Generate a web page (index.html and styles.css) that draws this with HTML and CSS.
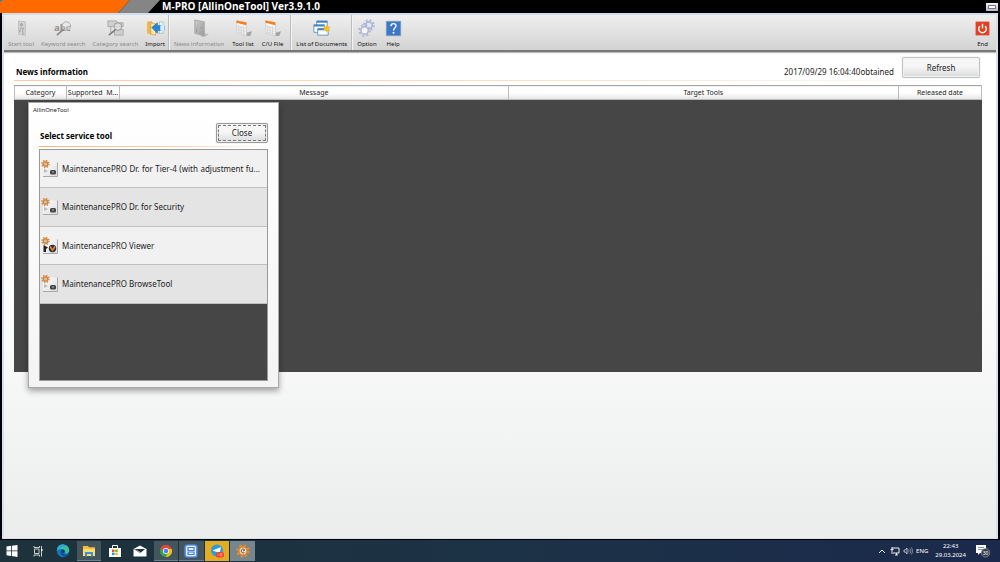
FILE: index.html
```html
<!DOCTYPE html>
<html lang="en">
<head>
<meta charset="utf-8">
<title>M-PRO [AllinOneTool]</title>
<link rel="stylesheet" href="styles.css">
</head>
<body>
<svg class="defs" aria-hidden="true">
  <defs>
    <linearGradient id="metal" x1="0" y1="0" x2="1" y2="1"><stop offset="0" stop-color="#cfcfcf"/><stop offset="1" stop-color="#989898"/></linearGradient>
    <linearGradient id="paper" x1="0" y1="0" x2="1" y2="1"><stop offset="0" stop-color="#fff"/><stop offset="1" stop-color="#dcdcdc"/></linearGradient>
    <symbol id="gear" viewBox="0 0 20 20">
      <g fill="none" stroke="currentColor"><circle cx="10" cy="10" r="5.4" stroke-width="2.6"/><circle cx="10" cy="10" r="8" stroke-width="3" stroke-dasharray="3.14 3.14"/></g>
    </symbol>
    <symbol id="sheet" viewBox="0 0 20 20">
      <path d="M11 15l8-2-2 5h-5z" fill="#a5a5a5"/>
      <path d="M3 2l10 2v14L3 15z" fill="#f4f4f4" stroke="#c4c4c4" stroke-width=".7"/>
      <path d="M2.500 1.500l10.500 2v3L2.500 4z" fill="#f58220"/>
      <path d="M5 7v8M7.500 7.500v8M10 8v9M4 8l8 2M4 11l8 2M4 13.500l8 2.200" stroke="#c9c9c9" stroke-width=".7"/>
    </symbol>
    <symbol id="tool" viewBox="0 0 18 18">
      <rect x="2" y="2.500" width="14.500" height="14" fill="url(#paper)"/>
      <path d="M16.500 2.500v14H2" fill="none" stroke="#a9a9a9"/>
      <circle cx="4.500" cy="4" r="2.300" fill="#b9c4cc" stroke="#d98637" stroke-width="1.500"/>
      <circle cx="4.500" cy="4" r="3.600" fill="none" stroke="#d98637" stroke-width="1.400" stroke-dasharray="1.410 1.410"/>
    </symbol>
  </defs>
</svg>
<div class="desktop">
  <header class="titlebar">
    <svg class="brand" viewBox="0 0 162 13" aria-hidden="true"><path d="M0 0h130l-12 13H0z" fill="#ff6a00"/><path d="M130 0h30l-12 13h-30z" fill="#858585"/><path d="M0 0h3L0 2z" fill="#1687d9"/></svg>
    <h1 class="app-title">M-PRO [AllinOneTool] Ver3.9.1.0</h1>
    <button class="minimize" aria-label="Minimize"><span></span></button>
  </header>

  <main class="window">
    <nav class="toolbar" aria-label="Main toolbar">
      <div class="group">
        <button class="tool" disabled><svg viewBox="0 0 20 20"><path d="M7 2l7 1v14l-7-1z" fill="#d6d6d6" stroke="#bcbcbc"/><circle cx="10" cy="6" r="1.700" fill="#aaa"/><path d="M9 9l3 1-1 3 1 4M9 10l-1 4" stroke="#b0b0b0" stroke-width="1.600" fill="none"/></svg>Start tool</button>
        <button class="tool" disabled><svg viewBox="0 0 20 20"><text x="0" y="13" class="abc">abc</text><circle cx="13" cy="7.500" r="4.500" fill="#eee" fill-opacity=".3" stroke="#aaa"/><path d="M10 11l-7 6" stroke="#888" stroke-width="1.700"/></svg>Keyword search</button>
        <button class="tool" disabled><svg viewBox="0 0 20 20"><path d="M2 2h9l1 2h6v4H2zM9 11h9v6H9z" fill="#cfcfcf" stroke="#aaa"/><path d="M5 8v6h4" fill="none" stroke="#aaa"/><circle cx="12.500" cy="8" r="4" fill="#ddd" fill-opacity=".8" stroke="#999"/><path d="M10 11l-7 6" stroke="#777" stroke-width="1.500"/></svg>Category search</button>
        <button class="tool"><svg viewBox="0 0 20 20"><path d="M1 3l5-1 1 2v13l-6-2z" fill="#edb84f"/><path d="M5 4l5 1v12l-5-1z" fill="#fae7ac" stroke="#c98a28" stroke-width=".6"/><path d="M14 3h4v12h-4z" fill="#edf4fa" stroke="#8aa" stroke-width=".6"/><path d="M6 9l6-5v3h7v5h-7v3z" fill="#2687d3" stroke="#176aac" stroke-width=".6"/><path d="M15 7l4-1v7l-4-1z" fill="#d9ecfa"/></svg>Import</button>
      </div>
      <div class="group">
        <button class="tool" disabled><svg viewBox="0 0 20 20"><path d="M13 15l7 1-5 3h-3z" fill="#b9b9b9"/><path d="M5 1l10 2v15L5 15z" fill="url(#metal)" stroke="#aaa"/><path d="M8 6v1M11 9h2M7 9v5" stroke="#999"/></svg>News information</button>
        <button class="tool"><svg><use href="#sheet"/></svg>Tool list</button>
        <button class="tool"><svg><use href="#sheet"/></svg>C/U File</button>
      </div>
      <div class="group">
        <button class="tool"><svg viewBox="0 0 20 20"><g stroke="#4283c4" stroke-width=".8"><path d="M5 2h11v8H5z" fill="#fff"/><path d="M5 3h11" stroke-width="1.800"/><path d="M2 6h11v8H2z" fill="#fff"/><path d="M2 7h11" stroke-width="1.800"/><path d="M6 10h11v7H6z" fill="#fff"/><path d="M6 11h11" stroke-width="1.800"/></g><path d="M15.500 6l1 2 2.500-.5-.8 2.500 1.300 1.800-2.500.4-1.500 2.300-1.300-2.300-2.500-.4 1.300-1.800-.8-2.500 2.300.5z" fill="#f7bf21"/></svg>List of Documents</button>
      </div>
      <div class="group">
        <button class="tool"><svg viewBox="0 0 20 20"><g color="#a9b5dc"><use href="#gear" x="6" y="0" width="13" height="13"/></g><g color="#b3b4da"><use href="#gear" x="1" y="5" width="14" height="14"/></g><circle cx="8" cy="12" r="3" fill="#f3f3fa"/></svg>Option</button>
        <button class="tool"><svg viewBox="0 0 20 20"><path d="M2.500 2.500h15v15h-15z" fill="#3c78c4" stroke="#7499c5"/><path d="M7.300 7.500c0-3.500 5.400-3.500 5.400-.3 0 2.300-2.700 2.300-2.700 4.800" fill="none" stroke="#fff" stroke-width="1.400"/><circle cx="10" cy="14.500" r="1" fill="#fff"/></svg>Help</button>
      </div>
      <button class="tool end"><svg viewBox="0 0 20 20"><path d="M3 3h14v14H3z" fill="#e63b1d" stroke="#c9674f" stroke-width=".6"/><path d="M7.300 7.500a4 4 0 1 0 5.400 0M10 5v5" fill="none" stroke="#fff" stroke-width="1.500"/></svg>End</button>
    </nav>

    <section class="news">
      <div class="news-head">
        <h2>News information</h2>
        <span class="obtained">2017/09/29 16:04:40obtained</span>
        <button class="button refresh">Refresh</button>
      </div>
      <table class="news-table">
        <colgroup><col class="c-category"><col class="c-model"><col class="c-message"><col class="c-target"><col class="c-date"></colgroup>
        <thead><tr><th>Category</th><th>Supported&nbsp; M...</th><th>Message</th><th>Target Tools</th><th>Released date</th></tr></thead>
        <tbody><tr><td colspan="5"></td></tr></tbody>
      </table>
    </section>
  </main>

  <section class="dialog" role="dialog" aria-label="AllinOneTool">
    <p class="dialog-title">AllinOneTool</p>
    <div class="dialog-head"><h2>Select service tool</h2><button class="button close">Close</button></div>
    <div class="services">
      <button class="service"><svg viewBox="0 0 18 18"><use href="#tool"/><path d="M3 9l4 2-4 2z" fill="#bbb"/><rect x="9" y="10" width="6" height="4.500" rx="1.500" fill="#444"/><path d="M11 12h2" stroke="#bbb"/></svg><span class="wide">MaintenancePRO Dr. for Tier-4 (with adjustment fu...</span></button>
      <button class="service"><svg viewBox="0 0 18 18"><use href="#tool"/><path d="M3 9l4 2-4 2z" fill="#bbb"/><rect x="9" y="10" width="6" height="4.500" rx="1.500" fill="#444"/><path d="M11 12h2" stroke="#bbb"/></svg><span>MaintenancePRO Dr. for Security</span></button>
      <button class="service"><svg viewBox="0 0 18 18"><use href="#tool"/><path d="M2.500 8l4.500 2.500-2 1.500v3H2.500z" fill="#222"/><circle cx="11.500" cy="11.500" r="3.700" fill="#333"/><path d="M9 9.500l2.500 3.500L14 9.500" stroke="#d98637" stroke-width="1.600" fill="none"/></svg><span>MaintenancePRO Viewer</span></button>
      <button class="service"><svg viewBox="0 0 18 18"><use href="#tool"/><path d="M3 9l4 2-4 2z" fill="#bbb"/><rect x="9" y="10" width="6" height="4.500" rx="1.500" fill="#444"/><path d="M11 12h2" stroke="#bbb"/></svg><span>MaintenancePRO BrowseTool</span></button>
    </div>
  </section>

  <footer class="taskbar">
    <div class="tasks">
      <button class="task" aria-label="Start"><svg viewBox="0 0 14 14"><path d="M1.500 2.500l4.500-.7v4.700H1.500zM6.800 1.700l5.700-.8v5.600H6.800zM1.500 7.300H6V12l-4.500-.7zM6.800 7.300h5.700v5.600l-5.700-.8z" fill="#fff"/></svg></button>
      <button class="task" aria-label="Task view"><svg viewBox="0 0 14 14"><path d="M3.500 5h4.500v4.500H3.500zM3 2v1.500h5.500V2M3 12.500V11h5.500v1.500M10.500 2v10.500" fill="none" stroke="#ddd" stroke-width=".9"/><path d="M10 5h1.500v2H10z" fill="#fff"/></svg></button>
      <button class="task" aria-label="Edge"><svg viewBox="0 0 14 14"><circle cx="7" cy="7" r="6.200" fill="#1673c2"/><path d="M1 7C1 2 4 .6 7 .6c4 0 6.500 3 6.300 6-.2 2.500-3 3.300-5 2.500 1.500-2 0-4-2.300-4C3.500 5 1.500 6 1 7z" fill="#39bf9d"/><path d="M1 7C1 2 4 .6 7 .6c2 0 3.500.8 4.500 2C7 1.500 3 3 1 7z" fill="#2ba3dc"/><path d="M6 5.500C3 8 5 12 9 12.500c1.500 0 3-1.500 3.500-2.300-3 1.300-6.500-.2-5.500-3.200z" fill="#0c4f97"/><path d="M6.500 6c2-.5 3 1.500 1.800 3-1.800-.3-2.500-1.500-1.800-3z" fill="#1b3540"/></svg></button>
      <button class="task active" aria-label="File Explorer"><svg viewBox="0 0 14 14"><path d="M1 2h5l1 1.300h6V12H1z" fill="#f4bd39"/><path d="M1 5h12v7H1z" fill="#ffdb76"/><path d="M3 8h8v4.500H9V10H5v2.500H3z" fill="#3c92d0"/></svg></button>
      <button class="task" aria-label="Store"><svg viewBox="0 0 14 14"><path d="M1 4h12v9H1z" fill="#fff"/><path d="M4.500 4V1.500h5V4" fill="none" stroke="#fff"/><path d="M4 5.500h2.500V8H4z" fill="#f25022"/><path d="M7.200 5.500h2.500V8H7.200z" fill="#7fba00"/><path d="M4 8.600h2.500v2.500H4z" fill="#00a4ef"/><path d="M7.200 8.600h2.500v2.500H7.200z" fill="#ffb900"/></svg></button>
      <button class="task" aria-label="Mail"><svg viewBox="0 0 14 14"><path d="M.5 5L7 1.500 13.500 5v7.500H.5z" fill="#fff"/><path d="M2 5h10L8 8.500z" fill="#1d323a"/><path d="M1 5l6.500 4" stroke="#1d323a" stroke-width=".6"/></svg></button>
      <button class="task active" aria-label="Chrome"><svg viewBox="0 0 14 14"><circle cx="7" cy="7" r="6" fill="#34a853"/><path d="M1.800 4A6 6 0 0 1 12.200 4L13 5.500H7L4.600 8.500z" fill="#ea4335"/><path d="M12.700 5A6 6 0 0 1 6.700 13l3-5L9 5z" fill="#fbbc05"/><circle cx="7" cy="7" r="3" fill="#fff"/><circle cx="7" cy="7" r="2.300" fill="#4285f4"/></svg></button>
      <button class="task active" aria-label="Remote service"><svg viewBox="0 0 14 14"><rect x=".5" y=".5" width="13" height="13" rx="2.500" fill="#5a93f2"/><rect x="2" y="1.800" width="10" height="10.400" rx="2" fill="#e9f1ff"/><path d="M4 3.500h6v3H4zM4 8h6v2.500H4z" fill="none" stroke="#3d7be0" stroke-width="1.200"/></svg></button>
      <button class="task telegram" aria-label="Telegram"><svg viewBox="0 0 14 14"><circle cx="7" cy="6.500" r="6" fill="#2a9bd8"/><path d="M2.500 6.500L11 3 9.500 10 6.700 8z" fill="#fff"/><rect x="6" y="8" width="8" height="5.500" rx="2.500" fill="#ef3b30"/><path d="M8 9.500v2.500M10 9.500h2v2.300h-2z" fill="none" stroke="#ffb8aa" stroke-width=".7"/></svg></button>
      <button class="task current" aria-label="M-PRO"><svg viewBox="0 0 14 14" color="#f08a24"><use href="#gear" x="0" y="0" width="14" height="14"/><circle cx="7" cy="7" r="3.200" fill="#f6e3cd"/><path d="M8.500 5.500a2 2 0 1 0 0 3M7 7l2-1" fill="none" stroke="#555"/></svg></button>
    </div>
    <div class="tray">
      <svg viewBox="0 0 10 10"><path d="M2 7l3-3 3 3" fill="none" stroke="#eee"/></svg>
      <svg viewBox="0 0 10 10"><path d="M2 2h7v5H3M2 1v7M.5 3.500h3M5 9h3M6.500 7v2" fill="none" stroke="#eee"/></svg>
      <svg viewBox="0 0 10 10"><path d="M1 4h1.500L4 2v6L2.500 6H1z" fill="none" stroke="#eee" stroke-width=".7"/><path d="M5.500 3.500q1 1.500 0 3M7 2.500q2 2.500 0 5M8.500 1.500q2.500 3.500 0 7" fill="none" stroke="#aab" stroke-width=".7"/></svg>
      <span>ENG</span>
      <time class="clock" datetime="2024-03-29T22:43"><span>22:43</span><span>29.03.2024</span></time>
      <svg class="notes" viewBox="0 0 16 14"><path d="M1 1h10v8H5l-2 2V9H1z" fill="#fff"/><path d="M3 3.500h6M3 5.500h6" stroke="#678" stroke-width=".8"/><circle cx="10.500" cy="8.800" r="4.300" fill="#353e50" stroke="#aaa" stroke-width=".6"/><text x="7.700" y="10.800" class="count">30</text></svg>
    </div>
  </footer>
</div>
</body>
</html>
```
FILE: styles.css
```css
* { box-sizing: border-box; }
body { margin: 0; font-family: "Noto Sans", "Open Sans", sans-serif; font-size: 7px; line-height: 10px; color: #1c1c1c; background: #000; }
h1, h2, p { margin: 0; }
button { font: inherit; color: inherit; border: 0; padding: 0; background: none; }
svg { display: block; flex: none; }
.defs { position: absolute; width: 0; height: 0; }
.desktop { position: relative; min-height: 100vh; display: flex; flex-direction: column; }

.titlebar { display: flex; align-items: center; height: 13px; background: #000; }
.brand { width: 162px; height: 13px; }
.app-title { flex: 1; font-family: "Open Sans", "Noto Sans", sans-serif; font-size: 10px; line-height: 13px; font-weight: 700; color: #fff; }
.minimize { display: grid; place-items: center; width: 12px; height: 8px; margin-right: 2px; background: linear-gradient(#f4f4f8, #b8bac8); }
.minimize span { width: 8px; height: 4px; border: 1px solid #777b8c; background: #fff; }

.window { flex: 1; margin: 0 2px 1px; border: 2px solid #d3e2f2; border-top-color: #cfdff1; border-bottom-width: 1px; background: linear-gradient(#fff 45%, #ebedec); }
.toolbar { display: flex; height: 37px; background: linear-gradient(#efefef, #d3d3d3); border-bottom: 2px solid #777; box-shadow: 0 1px 1px #bbb; }
.group { display: flex; gap: 7px; padding: 0 3px 0 4px; border-right: 1px solid #bdbdbd; }
.group + .group { gap: 8px; padding: 0 7px 0 4px; border-left: 1px solid #f3f3f3; }
.group:nth-child(3) { padding: 0 4px; }
.group:nth-child(4) { gap: 7px; border-right: 0; }
.tool { display: flex; flex-direction: column; align-items: center; gap: 1px; padding-top: 4px; font-size: 6px; line-height: 10px; color: #111; white-space: nowrap; }
.tool svg { width: 19px; height: 19px; }
.tool:disabled { color: #8c8c8c; }
.abc { font: 700 10px "Open Sans", sans-serif; fill: #8f8f8f; }
.end { margin-left: auto; padding-right: 4px; }

.news { padding: 5px 14px 0 10px; }
.news-head { display: flex; align-items: center; gap: 8px; height: 24px; border-bottom: 1px solid; border-image: linear-gradient(90deg, #ffc9a3, #fde0cd 60%, #fff) 1; }
.news-head h2 { flex: 1; padding: 6px 0 0 2px; font-size: 8px; font-weight: 700; color: #000; }
.obtained { padding-top: 6px; font-size: 8px; }
.button { border: 1px solid #c4c4c4; border-radius: 2px; background: linear-gradient(#f6f6f6 45%, #d8dada); box-shadow: inset 0 0 0 1px #f1f1f1, 0 0 1px #aaa; font-size: 8px; }
.refresh { align-self: flex-start; width: 78px; height: 21px; margin-right: 2px; }
.news-table { width: 100%; margin-top: 4px; border-collapse: collapse; table-layout: fixed; }
.c-category { width: 52px; }
.c-model { width: 53px; }
.c-message { width: 44.500%; }
.c-target { width: 44.700%; }
.c-date { width: 83px; }
.news-table th { height: 14px; padding: 0; border: 1px solid #bdbdbd; border-top-color: #a5a5a5; background: linear-gradient(#fff 50%, #e4e4e4); font-size: 7px; line-height: 12px; font-weight: 400; white-space: nowrap; }
.news-table td { height: 272px; padding: 0; border: 1px solid #464646; background: #464646; }

.dialog { position: absolute; left: 28px; top: 102px; width: 251px; padding: 3px 10px 6px; border: 1px solid #a9a9a9; background: linear-gradient(#fff, #f4f4f4); box-shadow: 0 3px 6px rgba(0, 0, 0, .35); }
.dialog-title { margin-left: -6px; font-size: 6px; line-height: 9px; }
.dialog-head { display: flex; align-items: center; justify-content: space-between; height: 32px; padding-top: 5px; border-bottom: 1px solid; border-image: linear-gradient(90deg, #ffb27c, #ffd9bf 70%, #fff) 1; }
.dialog-head h2 { padding: 6px 0 0 1px; font-size: 8px; font-weight: 700; color: #000; }
.close { width: 52px; height: 20px; outline: 1px dashed #777; outline-offset: -3px; border-color: #999; }
.services { min-height: 232px; margin-top: 2px; border: 1px solid #999; background: #464646; }
.service { display: flex; align-items: center; gap: 3px; width: 100%; height: 38px; padding: 0 7px 0 1px; border-bottom: 1px solid #c0c0c0; background: #f1f1f1; text-align: left; font-size: 8px; }
.service:nth-child(even) { height: 39px; background: #e4e4e4; }
.service svg { width: 18px; height: 18px; }
.service span { white-space: nowrap; }
.service .wide { flex: 1; text-align-last: justify; }

.taskbar { display: flex; height: 22px; background: linear-gradient(90deg, #1d323a, #1c3246 50%, #1b2a4c); color: #fff; }
.tasks { display: flex; width: 256px; }
.task { flex: 1; display: grid; place-items: center; height: 20px; margin: 1px 1px 0 0; }
.task svg { width: 14px; height: 14px; }
.active { background: #43565e; border-bottom: 1px solid #6e8088; }
.telegram { background: #e3ac22; }
.current { background: #76868c; }
.tray { display: flex; align-items: center; gap: 3px; margin-left: auto; padding-right: 9px; font-size: 6px; }
.tray svg { width: 10px; height: 10px; }
.tray .notes { width: 16px; height: 14px; margin-left: 6px; }
.clock { display: flex; flex-direction: column; align-items: center; margin-left: 4px; line-height: 9px; }
.count { font: 5px "Noto Sans", sans-serif; fill: #fff; }
```
